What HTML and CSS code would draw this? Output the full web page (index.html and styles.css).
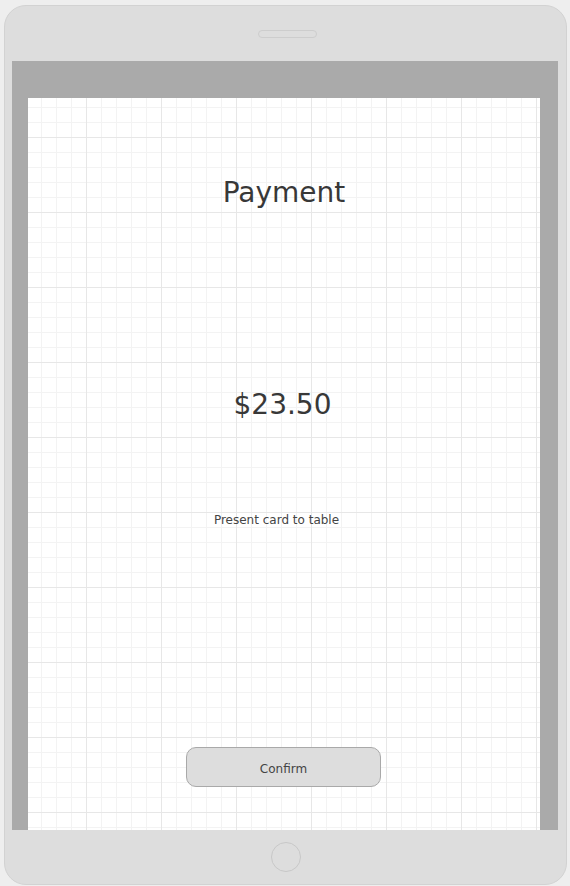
FILE: index.html
```html
<!DOCTYPE html>
<html lang="en">
<head>
<meta charset="utf-8">
<title>Payment</title>
<link rel="stylesheet" href="styles.css">
</head>
<body>
<div class="device">
  <div class="bezel-top"><div class="speaker"></div></div>
  <div class="screen">
    <div class="canvas">
      <h1 class="title">Payment</h1>
      <div class="amount">$23.50</div>
      <p class="hint">Present card to table</p>
      <button class="confirm" type="button">Confirm</button>
    </div>
  </div>
  <div class="bezel-bottom"><div class="home"></div></div>
</div>
</body>
</html>
```
FILE: styles.css
```css
html, body {
  margin: 0;
  padding: 0;
  background: #eeeeee;
  font-family: "DejaVu Sans", "Liberation Sans", sans-serif;
  color: #333333;
}

.device {
  box-sizing: border-box;
  margin: 5px 0 0 4px;
  width: 563px;
  height: 880px;
  background: #dddddd;
  border: 1px solid #d2d2d2;
  border-radius: 22px;
  display: flex;
  flex-direction: column;
}

.bezel-top {
  height: 55px;
  display: flex;
  justify-content: center;
  padding-left: 3px;
  box-sizing: border-box;
}

.speaker {
  margin-top: 24px;
  width: 59px;
  height: 8px;
  box-sizing: border-box;
  border: 1px solid #cdcdcd;
  border-radius: 4px;
  background: #dddddd;
}

.screen {
  flex: 1;
  margin: 0 8px 0 7px;
  background: #aaaaaa;
  padding: 37px 18px 0 16px;
  display: flex;
}

.canvas {
  flex: 1;
  background-color: #ffffff;
  background-image:
    linear-gradient(to right, #e7e7e7 1px, transparent 1px),
    linear-gradient(to bottom, #e7e7e7 1px, transparent 1px),
    linear-gradient(to right, #f3f3f3 1px, transparent 1px),
    linear-gradient(to bottom, #f3f3f3 1px, transparent 1px);
  background-size: 75px 75px, 75px 75px, 15px 15px, 15px 15px;
  background-position: 58px 39px, 58px 39px, 13px 9px, 13px 9px;
  display: flex;
  flex-direction: column;
  align-items: center;
  padding-top: 79px;
  box-sizing: border-box;
}

.title {
  margin: 0;
  font-size: 28px;
  line-height: 32px;
  font-weight: normal;
  color: #383838;
}

.amount {
  margin: 180px 3px 0 0;
  font-size: 28px;
  line-height: 32px;
  color: #383838;
}

.hint {
  margin: 92px 15px 0 0;
  font-size: 12px;
  line-height: 14px;
  color: #444444;
}

.confirm {
  margin: 220px 1px 0 0;
  width: 195px;
  height: 40px;
  box-sizing: border-box;
  background: #dddddd;
  border: 1px solid #a9a9a9;
  border-radius: 10px;
  font-family: "DejaVu Sans", "Liberation Sans", sans-serif;
  font-size: 12px;
  line-height: 14px;
  color: #444444;
  padding: 3px 0 0 0;
}

.bezel-bottom {
  flex: 0 0 54px;
  display: flex;
  justify-content: center;
  align-items: center;
  padding-left: 1px;
  box-sizing: border-box;
}

.home {
  width: 30px;
  height: 30px;
  box-sizing: border-box;
  border: 1px solid #c8c8c8;
  border-radius: 50%;
}
```
